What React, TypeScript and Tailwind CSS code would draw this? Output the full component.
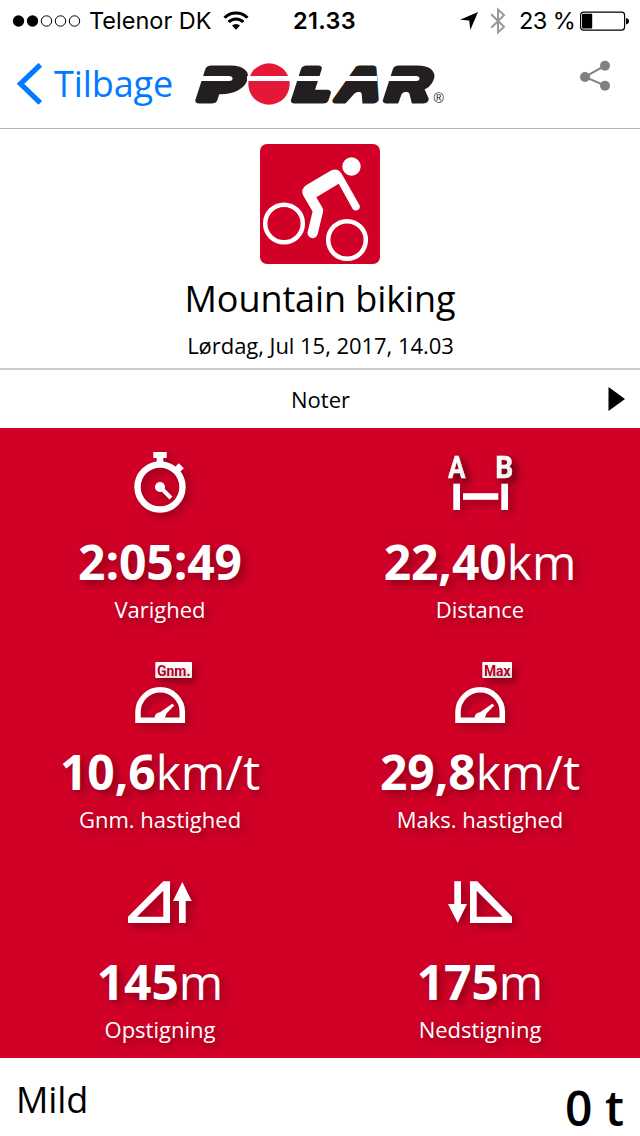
import React from "react";

interface StatProps {
  icon: React.ReactNode;
  value: string;
  unit?: string;
  label: string;
}

const StatusBar: React.FC = () => {
  return (
    <div className="h-10 pl-[12px] pr-[11px] grid grid-cols-[281px_63px_1fr] items-center font-['Inter',sans-serif] text-2xl leading-10 whitespace-nowrap">
      <div className="flex items-center">
        <svg width="70" height="14" viewBox="0 0 70 14" className="shrink-0">
          <circle cx="6.5" cy="7" r="5.7" />
          <circle cx="20.5" cy="7" r="5.7" />
          <circle cx="34.5" cy="7" r="5.2" fill="none" stroke="black" />
          <circle cx="48.5" cy="7" r="5.2" fill="none" stroke="black" />
          <circle cx="62.5" cy="7" r="5.2" fill="none" stroke="black" />
        </svg>
        <span className="ml-[7px] pt-px w-[123px] text-[23.5px]">Telenor DK</span>
        <svg width="26" height="20" viewBox="0 0 26 20" className="ml-[11px] shrink-0">
          <path d="M1.5 6.8a16.2 16.2 0 0 1 23 0" fill="none" stroke="black" strokeWidth="3" />
          <path d="M5.6 11a10.4 10.4 0 0 1 14.8 0" fill="none" stroke="black" strokeWidth="3" />
          <path d="M9 14.6a5.7 5.7 0 0 1 8 0L13 18.8z" />
        </svg>
      </div>
      <span className="pt-px text-center font-semibold text-[23.5px] tracking-[0.3px]">21.33</span>
      <div className="flex items-center justify-end">
        <svg width="18" height="18" viewBox="0 0 18 18">
          <path d="M18 0L10.3 18L9.2 8.6L0 7.7z" />
        </svg>
        <svg width="16" height="28" viewBox="0 0 16 28" className="ml-3">
          <path
            d="M1.2 7.2L14 19.8L8 25.4V2.6L14 8.2L1.2 20.8"
            fill="none"
            stroke="#999999"
            strokeWidth="2"
          />
        </svg>
        <span className="ml-[13px] pt-px w-[55px] text-[23.5px] tracking-[-0.6px]">23 %</span>
        <svg width="49" height="20" viewBox="0 0 49 20" className="ml-[6px] shrink-0">
          <rect x="0.6" y="1.1" width="44" height="18" rx="3" fill="none" stroke="black" strokeWidth="1.2" />
          <rect x="2" y="2.7" width="10.2" height="14.8" rx="1" />
          <path d="M46 7c2 .3 3 1.5 3 3.2s-1 2.9-3 3.2z" />
        </svg>
      </div>
    </div>
  );
};

const PolarLogo: React.FC = () => {
  return (
    <svg width="250" height="50" viewBox="195 60 250 50" className="shrink-0 overflow-visible">
      <g
        fill="#231f20"
        stroke="#231f20"
        strokeWidth="7"
        strokeLinejoin="round"
        fontFamily="Inter, sans-serif"
        fontSize="42.5"
        fontWeight="900"
      >
        <text transform="translate(197.5 99.5) skewX(-18)" textLength="40" lengthAdjust="spacingAndGlyphs">P</text>
        <text transform="translate(293 99.5) skewX(-18)" textLength="32.5" lengthAdjust="spacingAndGlyphs">L</text>
        <text transform="translate(335.5 99.5) skewX(-18)" textLength="40" lengthAdjust="spacingAndGlyphs">A</text>
        <text transform="translate(385 99.5) skewX(-18)" textLength="39.5" lengthAdjust="spacingAndGlyphs">R</text>
      </g>
      <circle cx="269" cy="84" r="20.7" fill="#e51937" />
      <g fill="white">
        <path d="M196 76H229Q232.5 76 232.5 78.5T229 81H196z" />
        <rect x="247" y="76" width="130" height="5" />
        <path d="M384 76H416Q419.5 76 419.5 78.5T416 81H384z" />
        <path d="M345 104L354.5 93.5Q356 92 358 92H359.5Q361.5 92 361.7 94L362.5 104z" />
        <path d="M398 104L401.5 94.5Q402.5 92 405 92H407Q409 92 409.5 94L412 104z" />
      </g>
      <text x="433.5" y="102.5" fontSize="14" fill="#231f20" fontFamily="Liberation Sans, sans-serif">®</text>
    </svg>
  );
};

const Header: React.FC = () => {
  return (
    <div className="h-[89px] border-b border-[#b2b2b2] flex items-start pl-[17px] pr-[30px]">
      <svg width="26" height="42" viewBox="0 0 26 42" className="mt-[23px] shrink-0">
        <path d="M23.3 1.8L3.5 20.8L23.3 39.8" fill="none" stroke="#007aff" strokeWidth="5.2" />
      </svg>
      <span className="ml-[11px] mt-[19px] w-[141px] text-[36px] leading-[50px] tracking-[-0.1px] text-[#007aff]">
        Tilbage
      </span>
      <div className="mt-5">
        <PolarLogo />
      </div>
      <svg width="30" height="32" viewBox="0 0 30 32" className="mt-5 ml-auto">
        <path d="M25 5.7L5 17L25 25.7" fill="none" stroke="#808080" strokeWidth="2" />
        <circle cx="5" cy="17" r="5" fill="#808080" />
        <circle cx="25" cy="5.7" r="5" fill="#808080" />
        <circle cx="25" cy="25.7" r="5" fill="#808080" />
      </svg>
    </div>
  );
};

const BikingIcon: React.FC = () => {
  return (
    <svg width="120" height="120" viewBox="0 0 120 120">
      <rect width="120" height="120" rx="7" fill="#d10027" />
      <g fill="none" stroke="white" strokeWidth="4.5">
        <circle cx="24" cy="79.5" r="18.8" />
        <circle cx="87" cy="96" r="18.8" />
      </g>
      <circle cx="91.5" cy="22.5" r="9.2" fill="white" />
      <path
        d="M71 26.5Q77.5 23.5 81.5 29.5L99.7 61.5A4 4 0 0 1 92.7 65L78.7 39.7L56.3 53.3L62.3 63.5Q63.5 65.5 63 68L57.7 90A5.1 5.1 0 0 1 47.6 88L52.6 67.5L43.5 52Q40 45.5 46 41.3z"
        fill="white"
      />
    </svg>
  );
};

const StatIcon: React.FC<{ children: React.ReactNode }> = ({ children }) => {
  return (
    <svg
      width="64"
      height="64"
      viewBox="0 0 64 64"
      fill="white"
      className="overflow-visible drop-shadow-[4px_4px_4px_rgba(0,0,0,0.3)]"
    >
      {children}
    </svg>
  );
};

const DurationIcon: React.FC = () => {
  return (
    <StatIcon>
      <path d="M25.3 0H38.7V6H35.3V12H28.7V6H25.3z" />
      <circle cx="32" cy="35" r="22.5" fill="none" stroke="white" strokeWidth="6.4" />
      <path d="M46 20L52 14" stroke="white" strokeWidth="4" />
      <path d="M46.2 15.7L50.8 11.2L55.8 16.2L51.2 20.8z" />
      <circle cx="32" cy="35" r="5" />
      <path d="M32 35L43 46" stroke="white" strokeWidth="4" />
    </StatIcon>
  );
};

const DistanceIcon: React.FC = () => {
  return (
    <StatIcon>
      <g fontFamily="Roboto, sans-serif" fontWeight="700" fontSize="31" stroke="white" strokeWidth="0.5">
        <text x="0" y="25.7" textLength="17.5" lengthAdjust="spacingAndGlyphs">A</text>
        <text x="47.3" y="25.7" textLength="18" lengthAdjust="spacingAndGlyphs">B</text>
      </g>
      <rect x="5.3" y="31.7" width="6.7" height="26.3" />
      <rect x="15" y="41.2" width="35.3" height="6.6" />
      <rect x="53.3" y="31.7" width="6.7" height="26.3" />
    </StatIcon>
  );
};

const SpeedIcon: React.FC<{ tag: string; tagWidth: number }> = ({ tag, tagWidth }) => {
  return (
    <StatIcon>
      <rect x={64 - tagWidth} y="0" width={tagWidth} height="16" rx="1" />
      <text
        x={65.7 - tagWidth}
        y="13.7"
        fill="#b90023"
        fontFamily="Roboto, sans-serif"
        fontWeight="700"
        fontSize="15.5"
        textLength={tagWidth - 3.2}
        lengthAdjust="spacingAndGlyphs"
      >
        {tag}
      </text>
      <path
        d="M10 58.2V50A22.15 22.15 0 0 1 54.3 50V58.2z"
        fill="none"
        stroke="white"
        strokeWidth="5.5"
      />
      <path d="M26.7 56A5.3 5 0 0 1 32 50.2L44.3 41.7L46.2 43.5L38.5 51.5L36.8 56z" />
    </StatIcon>
  );
};

const AscentIcon: React.FC = () => {
  return (
    <StatIcon>
      <path d="M0 51V44.7L35.3 9.3H42V51zM9 44.7H35.3V18.7z" fillRule="evenodd" />
      <path d="M54.3 10L63.7 29H57.7V51H51V29H45z" />
    </StatIcon>
  );
};

const DescentIcon: React.FC = () => {
  return (
    <StatIcon>
      <path d="M22 51V9.3H29.3L64 44.7V51zM28.7 44.7H54.7L28.7 18.7z" fillRule="evenodd" />
      <path d="M6.3 9.3H13V32H19L9.7 51L0 32H6.3z" />
    </StatIcon>
  );
};

const Stat: React.FC<StatProps> = ({ icon, value, unit, label }) => {
  return (
    <div className="h-[210px] pt-6 flex flex-col items-center text-white [text-shadow:4px_4px_8px_rgba(0,0,0,0.35)]">
      {icon}
      <div className="mt-4 text-[48px] leading-[60px] whitespace-nowrap">
        <span className="font-bold tracking-[-0.1px]">{value}</span>
        {unit && <span>{unit}</span>}
      </div>
      <span className="mt-[2px] text-[22px] leading-[30px]">{label}</span>
    </div>
  );
};

const App: React.FC = () => {
  return (
    <div className="w-[640px] h-[1136px] overflow-hidden bg-white text-black flex flex-col font-['Open_Sans',sans-serif]">
      <StatusBar />
      <Header />
      <div className="h-[241px] pt-[15px] border-b-2 border-[#cccccc] flex flex-col items-center">
        <BikingIcon />
        <h1 className="mt-[10px] text-[36px] leading-[50px] tracking-[-0.1px]">Mountain biking</h1>
        <p className="mt-[6px] pl-px text-[22px] leading-[30px] tracking-[-0.04px]">Lørdag, Jul 15, 2017, 14.03</p>
      </div>
      <div className="h-[58px] pr-[15px] grid grid-cols-[1fr_auto_1fr] items-center">
        <span className="col-start-2 pl-4 text-[22px] leading-[30px]">Noter</span>
        <svg width="17" height="24" viewBox="0 0 17 24" className="justify-self-end">
          <path d="M0.5 0L17 12L0.5 24z" />
        </svg>
      </div>
      <div className="grid grid-cols-2 bg-[#d10027]">
        <Stat icon={<DurationIcon />} value="2:05:49" label="Varighed" />
        <Stat icon={<DistanceIcon />} value="22,40" unit="km" label="Distance" />
        <Stat icon={<SpeedIcon tag="Gnm." tagWidth={36.7} />} value="10,6" unit="km/t" label="Gnm. hastighed" />
        <Stat icon={<SpeedIcon tag="Max" tagWidth={29.7} />} value="29,8" unit="km/t" label="Maks. hastighed" />
        <Stat icon={<AscentIcon />} value="145" unit="m" label="Opstigning" />
        <Stat icon={<DescentIcon />} value="175" unit="m" label="Nedstigning" />
      </div>
      <div className="h-[78px] px-4 flex justify-between items-start">
        <span className="mt-[17px] text-[36px] leading-[50px] tracking-[-0.1px]">Mild</span>
        <span className="mt-[24px] text-[48px] leading-[52px] font-semibold">0 t</span>
      </div>
    </div>
  );
};

export default App;
